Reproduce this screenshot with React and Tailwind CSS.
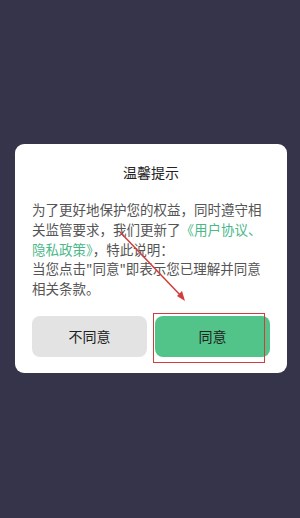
import React from 'react';

const font = { fontFamily: '"Noto Sans CJK SC", "Noto Sans", sans-serif' };

const App = () => {
  return (
    <div className="relative w-[300px] h-[518px] bg-[#35344a] overflow-hidden" style={font}>
      <div className="absolute inset-0 pt-[144px] pl-[15px]">
        <div className="w-[272px] h-[229px] bg-white rounded-[9px] px-[17px] pt-[18px] pb-[16px] flex flex-col">
          <h2 className="text-center text-[14px] leading-[20px] text-[#222]">温馨提示</h2>
          <p className="mt-[18px] text-[13.5px] leading-[19.8px] text-[#555] tracking-[0px]">
            <span className="block whitespace-nowrap">为了更好地保护您的权益，同时遵守相</span>
            <span className="block whitespace-nowrap">
              关监管要求，我们更新了<span className="text-[#4cb88a]">《用户协议、</span>
            </span>
            <span className="block whitespace-nowrap">
              <span className="text-[#4cb88a]">隐私政策》</span>，特此说明：
            </span>
            <span className="block whitespace-nowrap">当您点击"同意"即表示您已理解并同意</span>
            <span className="block whitespace-nowrap">相关条款。</span>
          </p>
          <div className="mt-auto flex gap-[8px]">
            <button className="flex-1 h-[41px] rounded-[8px] bg-[#e3e3e3] text-[14px] text-[#222]">
              不同意
            </button>
            <button className="flex-1 h-[41px] rounded-[8px] bg-[#52c48a] text-[14px] text-[#222]">
              同意
            </button>
          </div>
        </div>
      </div>
      {/* red annotation: box + arrow */}
      <div className="absolute left-[153px] top-[313px] w-[112px] h-[50px] border-[1.5px] border-[#d23c3c]" />
      <svg className="absolute left-0 top-0" width="300" height="518" viewBox="0 0 300 518">
        <line x1="120" y1="232" x2="183" y2="298" stroke="#d23c3c" strokeWidth="1.5" />
        <polygon points="185,301 177,296 182,291" fill="#d23c3c" />
      </svg>
    </div>
  );
};

export default App;
